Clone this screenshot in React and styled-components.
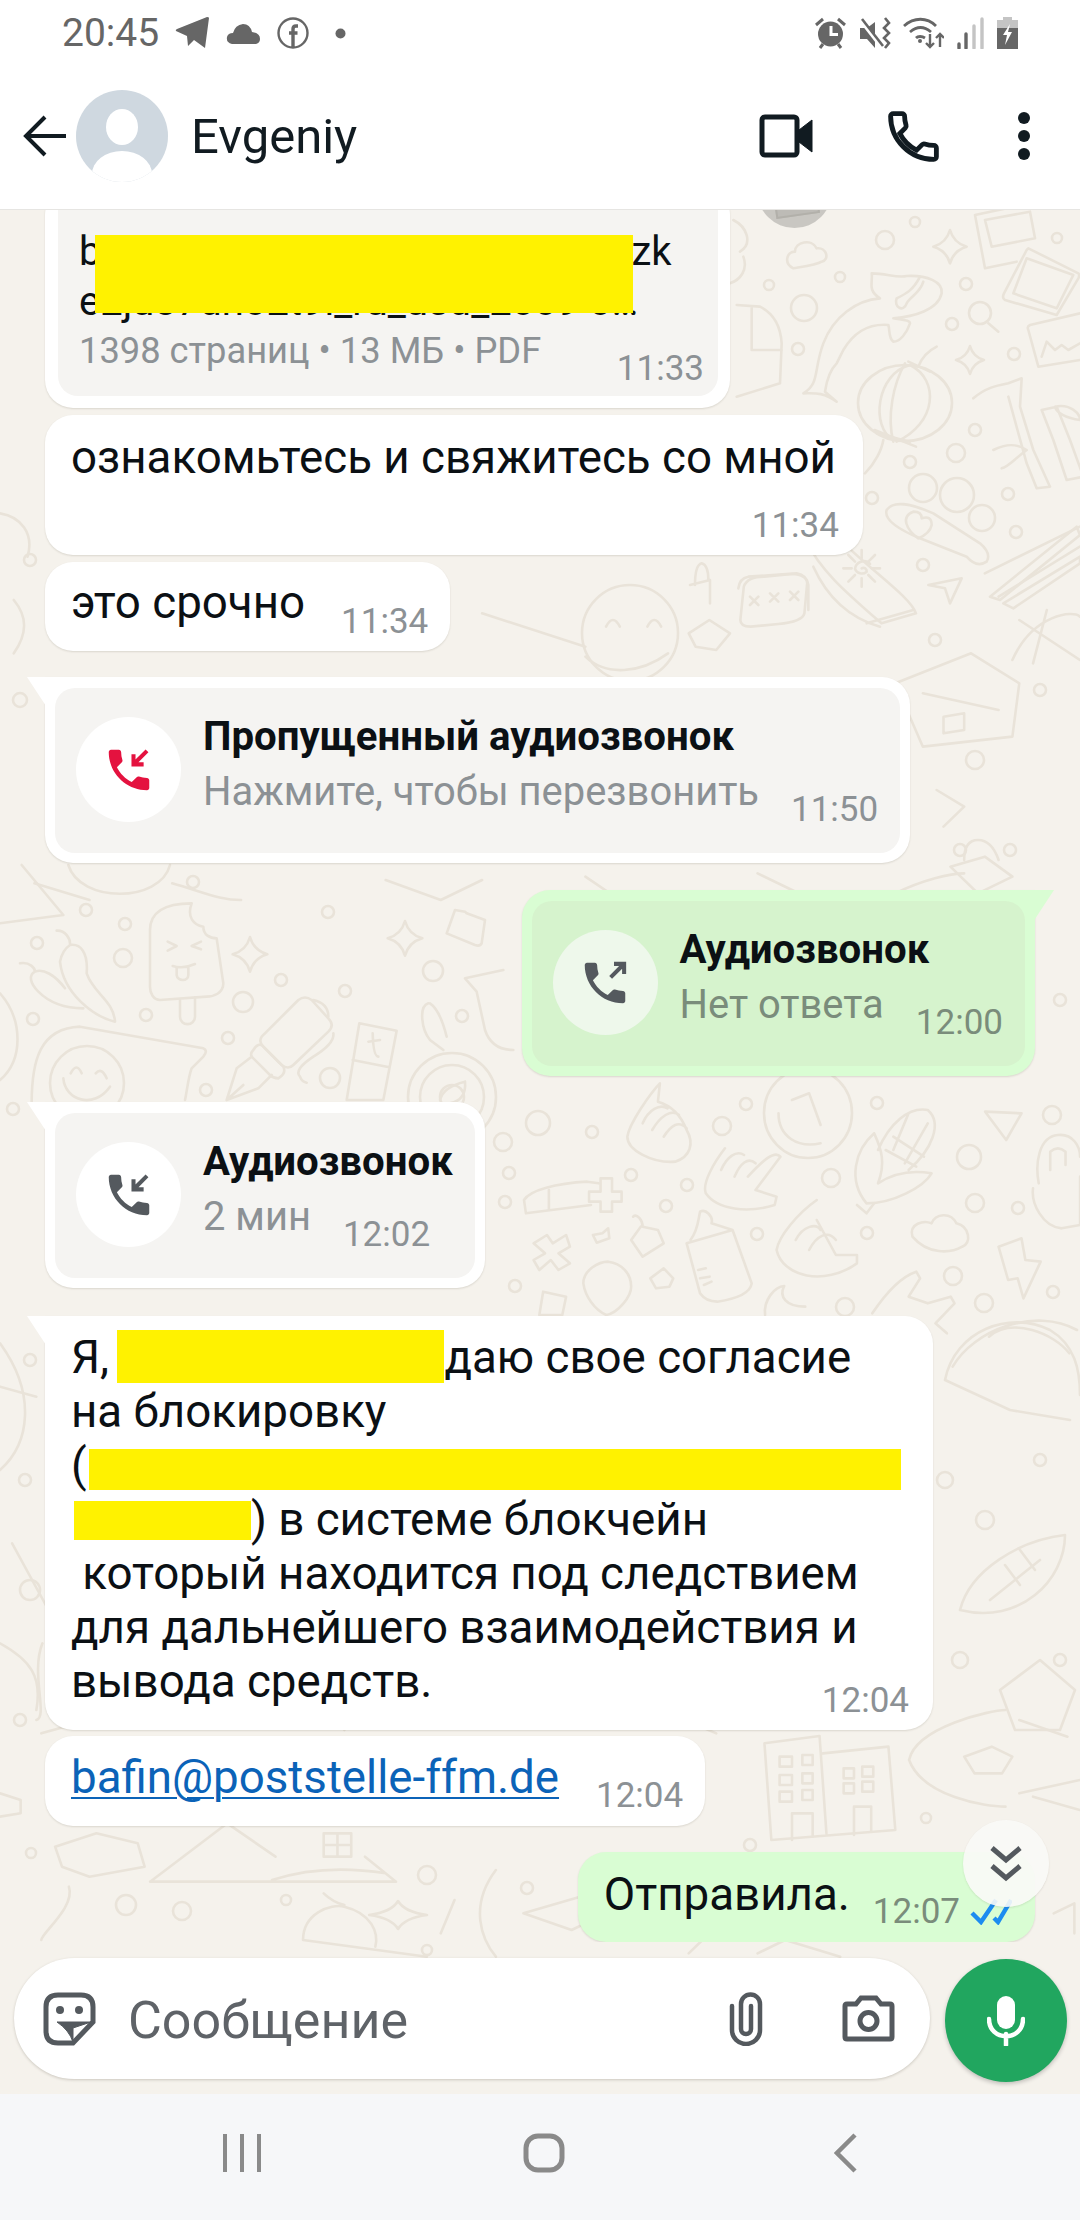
import React from 'react';
import styled, { createGlobalStyle } from 'styled-components';

const GlobalStyle = createGlobalStyle`
  html, body { margin: 0; padding: 0; background: #f5f2ec; }
  body { font-family: Roboto, "Noto Sans", sans-serif; }
  * { box-sizing: border-box; }
`;

const Screen = styled.div`
  width: 1080px;
  height: 2220px;
  display: flex;
  flex-direction: column;
  overflow: hidden;
`;

const Header = styled.header`
  height: 210px;
  flex-shrink: 0;
  background: #fff;
  border-bottom: 1px solid #e6e5e2;
  position: relative;
  z-index: 3;
`;

const StatusBar = styled.div`
  height: 66px;
  padding: 0 62px;
  display: flex;
  align-items: center;
  justify-content: space-between;
  color: #666;
`;

const StatusGroup = styled.div`
  display: flex;
  align-items: center;
  gap: ${p => p.$gap}px;
`;

const Clock = styled.span`
  font-size: 39px;
  line-height: 1;
  color: #666;
`;

const TopBar = styled.div`
  height: 140px;
  padding: 0 49px 0 23px;
  display: flex;
  align-items: center;
`;

const Avatar = styled.svg`
  width: 92px;
  height: 92px;
  margin-left: 10px;
  flex-shrink: 0;
`;

const Name = styled.div`
  margin-left: 23px;
  font-size: 49px;
  color: #111b21;
  flex: 1;
`;

const HeaderActions = styled.div`
  display: flex;
  align-items: center;
`;

const Chat = styled.main`
  flex: 1;
  min-height: 0;
  position: relative;
  background: #f5f2ec;
  display: flex;
  flex-direction: column;
`;

const Wallpaper = styled.svg`
  position: absolute;
  inset: 0;
  width: 1080px;
  height: 1884px;
  fill: none;
  stroke: #e9e3d9;
  stroke-width: 2.6;
  stroke-linecap: round;
  stroke-linejoin: round;
  * { vector-effect: non-scaling-stroke; }
`;

const Messages = styled.div`
  flex: 1;
  min-height: 0;
  overflow: hidden;
  position: relative;
  display: flex;
  flex-direction: column;
  justify-content: flex-end;
`;

const Bubble = styled.div`
  position: relative;
  flex-shrink: 0;
  align-self: ${p => (p.$out ? 'flex-end' : 'flex-start')};
  margin: ${p => p.$gap || 0}px ${p => (p.$out ? 45 : 0)}px 0 ${p => (p.$out ? 0 : 45)}px;
  width: ${p => (p.$width ? `${p.$width}px` : 'auto')};
  background: ${p => (p.$out ? '#d9fdd3' : '#fff')};
  border-radius: 28px;
  box-shadow: 0 1px 2px rgba(60, 50, 30, 0.14);
  ${p => p.$tail && !p.$out && 'border-top-left-radius: 0;'}
  ${p => p.$tail && p.$out && 'border-top-right-radius: 0;'}
  ${p => p.$tail && `
    &::before {
      content: '';
      position: absolute;
      top: 0;
      width: 19px;
      height: 29px;
      background: ${p.$out ? '#d9fdd3' : '#fff'};
      ${p.$out
        ? 'right: -19px; clip-path: polygon(0 0, 100% 0, 0 100%);'
        : 'left: -18px; clip-path: polygon(0 0, 100% 0, 100% 100%);'}
    }
  `}
`;

const InlineMessage = styled(Bubble)`
  display: flex;
  align-items: flex-start;
  gap: ${p => p.$between}px;
  padding: ${p => p.$top}px ${p => p.$right || 22}px ${p => p.$bottom}px 26px;
`;

const StackMessage = styled(Bubble)`
  display: flex;
  flex-direction: column;
  padding: 16px 27px 13px 26px;
`;

const LongMessage = styled(Bubble)`
  display: flex;
  flex-direction: column;
  padding: 14px 24px 13px 26px;
`;

const CallBubble = styled(Bubble)`
  padding: 11px 10px 10px;
`;

const FileBubble = styled(Bubble)`
  width: 685px;
  padding: 0 12px 12px 13px;
`;

const Text = styled.div`
  font-size: 45.7px;
  line-height: 54px;
  color: #0b1014;
  white-space: pre;
`;

const Link = styled.a`
  font-size: 45.7px;
  line-height: 54px;
  color: #0b63b8;
  text-decoration: underline;
  text-underline-offset: 4px;
  text-decoration-thickness: 2px;
  white-space: pre;
`;

const Time = styled.span`
  flex-shrink: 0;
  display: block;
  font-size: 35px;
  line-height: 33px;
  color: ${p => (p.$out ? '#7a8c7b' : '#8c9195')};
  margin-top: ${p => p.$drop || 0}px;
  ${p => p.$end && 'align-self: flex-end;'}
  ${p => p.$nudge && `margin-right: ${p.$nudge}px;`}
`;

const Ticks = styled.svg`
  width: 42px;
  height: 28px;
  margin: 29px 0 0 -13px;
  flex-shrink: 0;
`;

const Redact = styled.span`
  display: inline-block;
  background: #fff200;
  width: ${p => p.$w}px;
  height: ${p => p.$h}px;
  vertical-align: ${p => p.$drop}px;
  margin-left: ${p => p.$before || 0}px;
`;

const FileCover = styled.div`
  position: absolute;
  left: 16px;
  top: 8px;
  width: 538px;
  height: 78px;
  background: #fff200;
`;

const Panel = styled.div`
  border-radius: 20px;
  background: ${p => (p.$out ? '#d6f3cd' : '#f5f4f2')};
`;

const FilePanel = styled(Panel)`
  padding: 40px 14px 11px 21px;
`;

const FileName = styled.div`
  position: relative;
  font-size: 40px;
  line-height: 50px;
  height: 100px;
  color: #0b1014;
  white-space: nowrap;
`;

const NameGap = styled.span`
  display: inline-block;
  width: 530px;
`;

const FileMeta = styled.div`
  margin-top: 4px;
  display: flex;
  justify-content: space-between;
  align-items: flex-start;
`;

const MetaText = styled.span`
  font-size: 36.3px;
  line-height: 40px;
  color: #8c9195;
`;

const SharePuck = styled.div`
  position: absolute;
  left: 712px;
  bottom: 180px;
  width: 75px;
  height: 75px;
  border-radius: 50%;
  background: #c9c7c2;
  overflow: hidden;
  &::after {
    content: '';
    position: absolute;
    left: 18px;
    bottom: 12px;
    width: 40px;
    height: 14px;
    transform: rotate(-8deg);
    border: 2px solid #b2b0aa;
    background: #bdbbb6;
  }
`;

const CallPanel = styled(Panel)`
  display: flex;
  align-items: flex-start;
  padding: 24px 22px 27px 21px;
`;

const CallIcon = styled.div`
  width: 105px;
  height: 105px;
  margin: 5px 22px 0 0;
  flex-shrink: 0;
  border-radius: 50%;
  background: ${p => (p.$out ? '#eef8eb' : '#fff')};
  display: flex;
  align-items: center;
  justify-content: center;
`;

const CallBody = styled.div`
  display: flex;
  flex-direction: column;
`;

const CallTitle = styled.div`
  font-size: 40.2px;
  line-height: 50px;
  font-weight: 700;
  color: #0b1014;
  white-space: nowrap;
`;

const CallRow = styled.div`
  margin-top: 5px;
  display: flex;
  align-items: flex-start;
  gap: 32px;
`;

const CallSub = styled.span`
  font-size: 39.9px;
  line-height: 50px;
  color: ${p => (p.$out ? '#7a8c7b' : '#8c9195')};
  white-space: nowrap;
`;

const ScrollDown = styled.div`
  position: absolute;
  left: 963px;
  top: 1610px;
  width: 86px;
  height: 87px;
  border-radius: 50%;
  background: rgba(249, 249, 247, 0.9);
  box-shadow: 0 1px 2px rgba(60, 50, 30, 0.12);
  display: flex;
  align-items: center;
  justify-content: center;
  z-index: 2;
`;

const Composer = styled.div`
  position: relative;
  flex-shrink: 0;
  margin-top: 16px;
  padding: 0 13px 12px 14px;
  display: flex;
  align-items: flex-start;
  gap: 15px;
`;

const InputBox = styled.div`
  width: 916px;
  height: 121px;
  border-radius: 61px;
  background: #fff;
  box-shadow: 0 1px 3px rgba(60, 50, 30, 0.22);
  display: flex;
  align-items: center;
  padding: 0 35px 0 29px;
`;

const Placeholder = styled.div`
  flex: 1;
  margin-left: 32px;
  padding-top: 4px;
  font-size: 52px;
  color: #5f6368;
`;

const MicButton = styled.div`
  width: 122px;
  height: 123px;
  margin-top: 1px;
  border-radius: 50%;
  background: #21a65f;
  box-shadow: 0 2px 4px rgba(0, 0, 0, 0.22);
  display: flex;
  align-items: center;
  justify-content: center;
`;

const NavBar = styled.nav`
  height: 126px;
  flex-shrink: 0;
  background: #f6f7f9;
  display: grid;
  grid-template-columns: repeat(3, 302px);
  justify-content: center;
  justify-items: center;
  align-items: center;
  padding: 0 0 9px 8px;
`;

const ring = (x, y, r) => <circle key={`${x}-${y}`} cx={x} cy={y} r={r} />;

const star = (cx, cy, r) => {
  const k = r * 0.22;
  return `M${cx} ${cy - r}Q${cx + k} ${cy - k} ${cx + r} ${cy}Q${cx + k} ${cy + k} ${cx} ${cy + r}Q${cx - k} ${cy + k} ${cx - r} ${cy}Q${cx - k} ${cy - k} ${cx} ${cy - r}Z`;
};

const rings = [
  [885, 240, 9], [915, 222, 5], [1057, 238, 5], [840, 277, 5], [769, 285, 5], [804, 308, 13], [798, 349, 6],
  [966, 284, 6], [952, 324, 6], [1014, 354, 6], [975, 430, 6], [956, 453, 9], [910, 462, 6], [872, 498, 6],
  [1008, 494, 6], [1016, 532, 6], [923, 565, 6], [193, 882, 6], [86, 910, 6], [125, 924, 6], [37, 943, 6],
  [123, 958, 9], [33, 1019, 6], [146, 1015, 6], [281, 980, 6], [243, 1002, 10], [228, 1038, 6], [328, 912, 6],
  [345, 991, 6], [433, 971, 10], [462, 1016, 6], [330, 1078, 10], [206, 1090, 6], [13, 1109, 6],
  [538, 1123, 12], [503, 1142, 9], [592, 1132, 6], [509, 1173, 6], [505, 1202, 6], [631, 1175, 6], [666, 1206, 6],
  [687, 1185, 6], [722, 1126, 9], [746, 1104, 6], [877, 1103, 6], [831, 1178, 9], [969, 1157, 12], [1052, 1115, 9],
  [975, 1203, 9], [1018, 1208, 6], [757, 1234, 6], [867, 1233, 6], [953, 1276, 9], [984, 1303, 9], [1053, 1292, 6],
  [845, 1307, 9], [515, 1286, 6], [126, 1905, 10], [182, 1911, 9], [286, 1900, 5], [427, 1875, 9], [31, 1853, 5],
  [427, 1950, 5], [926, 1818, 5], [750, 1845, 6], [527, 1888, 6], [945, 1480, 8], [1040, 1460, 6], [985, 1520, 9],
  [1060, 1660, 6], [960, 1660, 8], [30, 560, 6], [20, 700, 7], [935, 640, 6], [1040, 690, 6], [975, 760, 9],
  [1010, 850, 6], [960, 850, 6], [1060, 1000, 6], [30, 1360, 6], [25, 1480, 6], [30, 1590, 10], [20, 1720, 6],
];

const zoom7 = [
  'M340 175C310 160 320 125 345 125C345 95 395 85 410 115C440 110 450 150 425 155C410 165 370 170 340 175Z',
  star(810, 110, 50), star(870, 450, 42),
  'M370 550C420 520 400 480 430 400C460 320 530 270 600 265C560 240 580 215 575 190C620 190 650 205 680 198C740 195 790 215 785 250C775 300 700 320 640 325C670 330 690 330 690 340C680 370 660 395 640 395C625 385 630 360 625 345C560 340 520 370 490 420L470 460C450 480 440 510 435 545L470 575C430 545 400 550 370 550Z',
  'M720 200C700 240 680 250 650 265C640 290 670 310 680 280C690 260 720 250 730 215',
  'M885 15L1050 -20M885 15L915 175L1010 155M915 30L1050 5L1065 85L935 110Z',
  'M1045 115L1195 190Q1200 195 1195 205L1130 315L975 270Q965 265 972 250L1040 120ZM1040 145L1180 195L1130 295L1000 250Z',
  'M1050 345L1200 310M1050 345Q1040 350 1045 360L1075 470L1200 450M1085 440L1100 395L1125 420L1145 405L1165 420L1200 400',
  'M925 340L955 365',
  'M690 465C590 490 570 650 640 690M690 465C780 510 770 640 650 695M675 460C640 520 620 620 640 695',
  'M685 455L750 485M715 470Q730 430 770 410M590 670L690 695M610 690C605 720 585 760 555 790',
  'M880 565C920 530 960 525 985 520L1025 505L1020 590L1060 720L1110 830L1070 835L1040 760L985 560',
  'M940 720C980 700 1010 700 1040 720C1000 750 985 770 965 775',
  'M1085 600L1130 590L1170 690L1210 800L1160 810L1120 690ZM1125 590C1170 580 1200 610 1200 630C1160 625 1130 610 1125 590',
  'M620 900C640 870 690 880 760 910L900 1000Q935 1030 920 1055Q890 1075 860 1040L720 985C660 960 610 930 620 900Z',
  'M715 985C680 960 660 920 700 905Q725 905 725 925Q755 915 755 945Q750 970 715 985Z',
  'M930 1160L1190 950L1200 975L960 1170ZM970 1180L1200 1040V1060L1000 1195Z',
  'M545 1045V1020M545 1105V1130M515 1075H490M575 1075H600M525 1055L505 1035M565 1055L585 1035M525 1095L505 1115M565 1095L585 1115',
  'M545 1075a10 10 0 0 1 15 10a22 22 0 0 1 -35 -8a26 26 0 0 1 45 -15',
  'M745 1125L845 1105L810 1180L795 1135Z',
  'M175 1135Q178 1105 205 1100L350 1090Q380 1095 385 1125V1200',
  'M210 1160L235 1185M235 1160L210 1185M270 1150L295 1175M295 1150L270 1175M330 1145L355 1170M355 1145L330 1170',
  'M30 1125L90 1110V1180M45 1125Q45 1065 65 1060Q85 1065 85 1110',
  'M170 285L240 290Q300 320 305 400L300 520L170 560M215 290V420H305',
  'M160 30C200 50 220 100 180 125M150 220C180 210 205 180 190 140',
  'M400 1070C450 1180 530 1230 600 1250M700 1200L560 1240',
];

const zoom8 = [
  'M450 380V210C450 160 490 130 575 130C560 170 580 195 610 200C610 225 630 235 650 235L670 370C670 400 640 410 620 410L480 420C460 420 450 400 450 380Z',
  'M540 420V470C540 500 585 500 585 470V412',
  'M503 245L530 258L503 272M603 245L575 258L603 268M518 318Q550 328 585 312M530 325V345C532 365 565 365 565 345V322',
  star(750, 283, 52), star(1215, 235, 52),
  'M210 255C240 250 265 275 260 340C280 400 340 420 345 485C280 470 190 400 180 305C185 280 195 265 210 255ZM170 212C195 210 212 235 210 255',
  'M60 310C90 305 105 325 105 335C85 345 90 370 115 395C150 430 200 445 250 445M105 335C130 325 165 345 195 385',
  'M95 730C95 600 120 505 240 500L610 565Q625 572 610 590L575 625C565 650 560 700 555 720',
  'M212 640Q230 605 245 640M287 640Q305 620 320 655M190 655C195 720 280 750 330 680',
  'M785 530L895 420Q915 405 935 420L985 475Q1005 495 985 515L880 615Q865 630 845 615L790 560Q775 545 785 530Z',
  'M760 570Q775 545 790 560L850 620Q860 640 835 655Q820 655 810 645L755 590Q750 580 760 570',
  'M755 590L710 625L680 720L775 685L815 645M680 720L730 675',
  'M940 420Q985 430 985 470M1000 520Q1005 550 940 590Q880 630 900 650Q905 665 920 668',
  'M1078 490L1190 512L1150 720L1040 720ZM1058 600L1168 622M1118 520Q1120 590 1135 590M1105 545L1140 540',
  'M1285 430C1255 440 1265 510 1290 540L1330 570M1290 430Q1320 450 1340 530',
  'M1395 665Q1330 680 1320 720M1395 665Q1400 720 1350 730',
  'M65 15L190 165L0 190M205 15C240 130 480 130 510 15M0 400C70 480 70 600 0 660',
  'M1395 355L1510 330M1395 355L1430 395L1455 510Q1475 570 1540 570',
  'M1340 220L1365 150L1395 155L1400 160L1455 180L1445 250Q1440 260 1425 255Z',
];

const zoom9 = [
  'M470 40C445 70 390 160 385 200C385 240 450 280 510 275C550 260 560 220 540 180C530 150 510 110 465 95ZM425 160C440 120 470 100 490 115M450 180C470 140 500 115 520 135M480 200C500 165 520 150 540 175',
  'M815 90L860 70L890 165M780 130C780 200 830 235 890 220',
  'M1030 190C980 240 960 330 1010 400C1080 400 1160 350 1180 310C1130 300 1080 310 1040 340M1030 190C1050 240 1060 280 1040 340M1040 240C1070 160 1120 110 1170 120C1210 160 1180 240 1120 300M1080 200L1160 260M1060 240L1140 290M1120 130L1080 240M1170 160L1110 280',
  'M985 405L1010 430L1030 400',
  'M1320 125L1415 130L1375 210Z',
  'M1460 340C1450 280 1460 200 1510 195C1550 190 1568 230 1568 260M1490 300V245Q1510 225 1530 245V285M1445 355C1440 400 1470 470 1520 475L1568 465V320',
  'M120 430L115 390C130 360 200 340 280 335L310 340M180 360V420M120 430L290 405',
  'M285 365H315V325H345V365H370V395H345V425H315V395H285Z',
  'M640 235C610 280 580 340 590 370C620 420 700 430 770 405L775 380L720 360L785 260C770 240 740 270 700 320',
  'M630 300C645 260 670 240 690 255M665 320C680 280 700 260 720 280',
  'M880 390C830 430 780 500 775 540C790 620 900 650 985 580L985 555L930 555L880 450',
  'M825 510C845 465 880 460 890 480M860 540C880 495 910 480 930 510',
  'M1130 500C1120 460 1160 450 1180 460C1190 430 1230 425 1245 460C1280 470 1285 520 1260 530C1230 550 1170 555 1130 500Z',
  'M1355 530L1415 505L1425 570L1465 575L1420 685L1405 625L1380 630Z',
  'M140 520L175 495L190 520L225 495L235 530L205 550L235 580L205 600L185 570L155 600L140 570L170 550Z',
  'M400 440C410 430 425 450 425 470L465 480L480 520L425 560L395 510L420 470',
  'M320 490L335 475L338 505L305 518L295 495Z',
  'M540 520L660 480L710 640Q705 680 620 695Q590 695 575 670ZM550 510C570 480 570 450 575 425C590 415 610 440 605 460L660 480M570 600L590 595M575 625L600 620M585 645L605 635',
  'M270 640C270 600 310 575 335 575C370 580 395 610 395 650C395 680 360 730 330 735C300 720 275 680 270 640Z',
  'M445 625L480 595L505 625L495 650L460 655Z',
  'M165 665L225 680L215 735H155Z',
  'M745 735C740 690 770 650 795 648C780 680 800 710 850 710',
  'M1025 730C1060 670 1100 620 1140 605L1150 625L1120 680L1170 700L1230 680L1240 700L1190 760L1220 790',
  'M1235 890C1290 780 1450 710 1560 780M1330 800C1390 740 1500 790 1540 850',
];

const zoom2 = [
  'M1080 560Q1085 530 1110 530L1150 522Q1172 525 1172 550L1168 640Q1165 665 1130 672L1090 680Q1075 680 1075 660Z',
  'M880 680Q890 640 900 680M940 680Q950 640 960 680M850 770C880 830 930 820 970 760',
  'M1000 700L1030 660L1060 700L1040 750L1010 740Z',
  'M700 640L850 740M1300 850L1410 760L1480 850L1470 1010L1340 1040Z',
  'M1340 880L1450 930M1370 950L1400 940L1400 990L1370 1000Z',
  'M1470 780C1500 640 1560 630 1568 650M1480 660L1568 780M1520 630L1500 790',
  'M1430 520L1568 380M1568 440L1450 590M1200 370C1240 480 1320 580 1330 640L1280 670C1230 580 1190 510 1170 420',
  'M1270 90L1330 140M20 600C40 650 40 700 20 760M0 340C30 350 50 400 40 470',
  'M1380 1400L1430 1370L1470 1430L1420 1480ZM1400 1380Q1400 1320 1420 1320Q1440 1320 1450 1380',
  'M1300 1480C1340 1440 1380 1420 1400 1420M1360 1170L1400 1220L1370 1280M1100 1420L1180 1500M50 1450L130 1500',
  'M560 1440L640 1500M250 1450C300 1480 320 1500 350 1500M700 1440L640 1500M850 1430L900 1500',
];

const zoom4 = [
  'M1120 420L1110 130L1190 108L1200 400M1195 160L1290 140L1300 390L1120 420',
  'M1132 170H1150V200H1132ZM1165 165H1180V195H1165ZM1132 225H1150V255H1132ZM1165 220H1180V250H1165ZM1132 275H1150V305H1132ZM1165 270H1180V300H1165ZM1225 205H1240V235H1225ZM1252 200H1268V230H1252ZM1225 250H1240V280H1225ZM1252 245H1268V275H1252Z',
  'M1150 420V340H1180V410M1240 405V320H1265V395',
  'M218 545L330 370L400 470M218 545H575L530 470M395 540Q470 490 560 520',
  'M470 400H510V470H470ZM490 400V470M470 435H510',
  'M440 720C440 640 480 610 500 620C540 640 550 700 545 740M440 720L620 770M470 580C480 600 490 610 500 615',
  'M1400 170L1440 140L1470 170L1455 220L1415 220Z',
  'M1320 180C1330 80 1440 30 1460 30M1320 180C1340 290 1430 320 1460 320',
  'M1480 280L1568 240M1500 290L1568 330',
  'M80 440L140 400L200 430L210 500L130 530L90 500ZM100 560C110 620 60 700 60 720',
  star(578, 645, 42),
  'M660 600L640 700M720 510C680 620 700 720 720 770M760 640L830 690L880 640L860 580Z',
  'M1100 760L1140 720L1220 770',
  'M1530 640L1560 610V700',
  'M0 280L30 300V340L0 350M1000 760L1020 720',
  'M60 100L130 60M300 70L360 20M500 90L470 20M690 60L770 30M960 30L1040 100M1480 60L1550 110',
];

const zoom10 = [
  'M0 100C60 250 50 400 0 480M20 700L80 900M0 1000C50 1050 70 1100 60 1200',
  'M0 230L60 260M70 1000C50 1090 80 1220 60 1230',
];

const rightColumn = [
  'M945 1380C955 1330 1010 1310 1050 1330C1075 1345 1080 1370 1080 1395M945 1380L1010 1410L1070 1420',
  'M960 1610C970 1570 1020 1540 1065 1535C1065 1580 1020 1625 960 1610ZM990 1600L1040 1560M1005 1565L1020 1585M1020 1550L1035 1570',
  'M1000 1690L1040 1660L1075 1690L1060 1730L1015 1730Z',
];

const Doodles = ({ items, x = 0, y = 0, sx = 1, sy = 1 }) => (
  <g transform={`translate(${x} ${y}) scale(${sx} ${sy})`}>
    {items.map((d, i) => <path key={i} d={d} />)}
  </g>
);

const DoodleLayer = () => (
  <Wallpaper viewBox="0 210 1080 1884">
    {rings.map(([x, y, r]) => ring(x, y, r))}
    <circle cx="980" cy="313" r="11" />
    <ellipse cx="905" cy="403" rx="47" ry="38" />
    <circle cx="923" cy="488" r="14" />
    <circle cx="957" cy="495" r="17" />
    <circle cx="982" cy="518" r="13" />
    <circle cx="630" cy="633" r="48" />
    <circle cx="87" cy="1083" r="37" />
    <circle cx="452" cy="1097" r="12" />
    <circle cx="452" cy="1097" r="32" />
    <circle cx="452" cy="1097" r="44" />
    <ellipse cx="808" cy="1113" rx="44" ry="45" />
    <Doodles items={zoom7} x={680} y={210} sx={1 / 3} sy={1 / 3} />
    <Doodles items={zoom8} x={0} y={860} sx={1 / 3} sy={1 / 3} />
    <Doodles items={zoom9} x={480} y={1070} sx={0.3827} sy={1 / 3} />
    <Doodles items={zoom2} x={0} y={400} sx={0.6887} sy={1 / 3} />
    <Doodles items={zoom4} x={0} y={1700} sx={0.6887} sy={1 / 3} />
    <Doodles items={zoom10} x={0} y={1310} sx={0.606} sy={1 / 3} />
    <Doodles items={rightColumn} />
  </Wallpaper>
);

const HANDSET = 'M6.62 10.79c1.44 2.83 3.76 5.14 6.59 6.59l2.2-2.2c.27-.27.67-.36 1.02-.24 1.12.37 2.33.57 3.57.57.55 0 1 .45 1 1V20c0 .55-.45 1-1 1-9.39 0-17-7.61-17-17 0-.55.45-1 1-1h3.5c.55 0 1 .45 1 1 0 1.25.2 2.45.57 3.57.11.35.03.74-.25 1.02l-2.2 2.2z';

const CallGlyph = ({ color, outgoing }) => (
  <svg width="54" height="54" viewBox="0 0 24 24">
    <path d={HANDSET} fill={color} />
    <path
      d={outgoing ? 'M14.5 9.5L20 4M16 3.5H20.5V8' : 'M20 3.5L14.5 9M14 5V9.5H18.5'}
      fill="none"
      stroke={color}
      strokeWidth="1.8"
    />
  </svg>
);

const Call = ({ out, tail, gap, title, sub, time, color, outgoing }) => (
  <CallBubble $out={out} $tail={tail} $gap={gap}>
    <CallPanel $out={out}>
      <CallIcon $out={out}><CallGlyph color={color} outgoing={outgoing} /></CallIcon>
      <CallBody>
        <CallTitle>{title}</CallTitle>
        <CallRow>
          <CallSub $out={out}>{sub}</CallSub>
          <Time $out={out} $drop={26}>{time}</Time>
        </CallRow>
      </CallBody>
    </CallPanel>
  </CallBubble>
);

const Status = () => (
  <StatusBar>
    <StatusGroup $gap={16}>
      <Clock>20:45</Clock>
      <svg width="35" height="32" viewBox="0 0 35 32" fill="#666">
        <path d="M34 1L30 31 19 23 13 29 12 19 1 14Q0 13 2 12L32 0Q34 0 34 1ZM14 18L27 8 17 20Z" />
      </svg>
      <svg width="35" height="21" viewBox="0 0 35 21" fill="#666">
        <path d="M6 21Q0 20 1 14 2 10 7 10 9 2 17 1 24 1 26 9 34 10 34 16 34 20 30 21Z" />
      </svg>
      <svg width="32" height="32" viewBox="0 0 32 32" fill="none" stroke="#666" strokeWidth="2.4">
        <circle cx="16" cy="16" r="14.5" />
        <path d="M21 9H19Q16 9 16 12V31M12 16H20.5" strokeWidth="3.4" />
      </svg>
      <svg width="11" height="11" viewBox="0 0 11 11" style={{ marginLeft: 10 }}>
        <circle cx="5.5" cy="5.5" r="5" fill="#666" />
      </svg>
    </StatusGroup>
    <StatusGroup $gap={12}>
      <svg width="33" height="32" viewBox="0 0 33 32" fill="#666">
        <circle cx="16.5" cy="17" r="12.5" />
        <path d="M2 8L9 2M31 8L24 2M6 31L9 27M27 31L24 27" stroke="#666" strokeWidth="3" />
        <path d="M15.5 9H18.5V16H24V19H15.5Z" fill="#fff" />
      </svg>
      <svg width="32" height="32" viewBox="0 0 32 32" fill="#666">
        <path d="M1 11H8L16 5V31L8 22H1Z" />
        <path d="M1 3L22 30" stroke="#fff" strokeWidth="3" />
        <path d="M3 2L24 29" stroke="#666" strokeWidth="2.6" />
        <path d="M26 1L30 6 25 11 30 16 25 21 30 26 26 31" fill="none" stroke="#666" strokeWidth="2.6" />
      </svg>
      <svg width="41" height="32" viewBox="0 0 41 32" fill="none" stroke="#666" strokeWidth="2.8">
        <path d="M1 9C11 0 24 0 33 9M7 15C14 9 21 9 28 15M13 21C15 19 19 19 22 21" />
        <circle cx="17" cy="24" r="2" fill="#666" stroke="none" />
        <path d="M27 17V30M23 26L27 30 31 26M37 30V17M33 21L37 17 41 21" strokeWidth="2.4" />
      </svg>
      <svg width="29" height="32" viewBox="0 0 29 32" fill="none" strokeWidth="3.4" strokeLinecap="round">
        <path d="M3 31V27M10 31V17" stroke="#666" />
        <path d="M18 31V9M26 31V2" stroke="#c4c4c4" />
      </svg>
      <svg width="21" height="32" viewBox="0 0 21 32" fill="#666">
        <path d="M6 0H15V3H21V32H0V3H6Z" />
        <path d="M6 0H15V3H21V11H0V3H6Z" fill="#c4c4c4" />
        <path d="M13 7L6 18H10L8 28 15 15H11L13 7Z" fill="#fff" />
      </svg>
    </StatusGroup>
  </StatusBar>
);

const TopRow = () => (
  <TopBar>
    <svg width="43" height="42" viewBox="0 0 43 42" fill="none" stroke="#111b21" strokeWidth="4">
      <path d="M43 21H3M22 2L3 21 22 40" />
    </svg>
    <Avatar viewBox="0 0 92 92">
      <defs>
        <clipPath id="avatarClip"><circle cx="46" cy="46" r="46" /></clipPath>
      </defs>
      <circle cx="46" cy="46" r="46" fill="#cfd8e0" />
      <g clipPath="url(#avatarClip)" fill="#fff">
        <ellipse cx="46" cy="37" rx="16" ry="18" />
        <ellipse cx="46" cy="84" rx="30" ry="23" />
      </g>
    </Avatar>
    <Name>Evgeniy</Name>
    <HeaderActions>
      <svg width="54" height="44" viewBox="0 0 54 44" fill="none" stroke="#111b21" strokeWidth="5">
        <rect x="3" y="3" width="35" height="38" rx="3" />
        <path d="M40 16L53 6V38L40 28Z" fill="#111b21" strokeWidth="1" />
      </svg>
      <svg width="61" height="61" viewBox="0 0 24 24" fill="none" stroke="#111b21" strokeWidth="1.9" style={{ marginLeft: 70 }}>
        <path d={HANDSET} />
      </svg>
      <svg width="14" height="50" viewBox="0 0 14 50" fill="#111b21" style={{ marginLeft: 73 }}>
        <circle cx="7" cy="7" r="6" />
        <circle cx="7" cy="25" r="6" />
        <circle cx="7" cy="43" r="6" />
      </svg>
    </HeaderActions>
  </TopBar>
);

const ChatThread = () => (
  <Messages>
    <FileBubble>
      <SharePuck />
      <FilePanel>
        <FileName>
          <FileCover />
          b<NameGap />zk
          <br />
          e2ju87dn02t9i_ru_usd_2009 0…
        </FileName>
        <FileMeta>
          <MetaText>1398 страниц • 13 МБ • PDF</MetaText>
          <Time $drop={21}>11:33</Time>
        </FileMeta>
      </FilePanel>
    </FileBubble>

    <StackMessage $gap={7}>
      <Text>ознакомьтесь и свяжитесь со мной</Text>
      <Time $drop={24} $end $nudge={-3}>11:34</Time>
    </StackMessage>

    <InlineMessage $gap={7} $between={36} $top={14} $bottom={13}>
      <Text>это срочно</Text>
      <Time $drop={29}>11:34</Time>
    </InlineMessage>

    <Call tail gap={26} title="Пропущенный аудиозвонок" sub="Нажмите, чтобы перезвонить" time="11:50" color="#e4123f" />
    <Call out tail outgoing gap={27} title="Аудиозвонок" sub="Нет ответа" time="12:00" color="#54595e" />
    <Call tail gap={26} title="Аудиозвонок" sub="2 мин" time="12:02" color="#54595e" />

    <LongMessage $tail $gap={28} $width={888}>
      <Text>Я, <Redact $w={327} $h={53} $drop={-10} $before={-3} />даю свое согласие</Text>
      <Text>на блокировку</Text>
      <Text>(<Redact $w={812} $h={41} $drop={-9} $before={2} /></Text>
      <Text><Redact $w={177} $h={39} $drop={-5} $before={3} />) в системе блокчейн</Text>
      <Text> который находится под следствием</Text>
      <Text>для дальнейшего взаимодействия и</Text>
      <Text>вывода средств.</Text>
      <Time $drop={-25} $end>12:04</Time>
    </LongMessage>

    <InlineMessage $gap={6} $between={37} $top={15} $bottom={14}>
      <Link>bafin@poststelle-ffm.de</Link>
      <Time $drop={28}>12:04</Time>
    </InlineMessage>

    <InlineMessage $out $gap={26} $between={23} $top={16} $bottom={14} $right={23}>
      <Text>Отправила.</Text>
      <Time $out $drop={27}>12:07</Time>
      <Ticks viewBox="0 0 42 28" fill="none" stroke="#1d8cf0" strokeWidth="4.4">
        <path d="M2 16L11 25 26 3M24 21L28 25 41 3" />
      </Ticks>
    </InlineMessage>

    <ScrollDown>
      <svg width="34" height="38" viewBox="0 0 34 38" fill="none" stroke="#54595e" strokeWidth="5">
        <path d="M3 3L17 15 31 3M3 21L17 33 31 21" />
      </svg>
    </ScrollDown>
  </Messages>
);

const MessageComposer = () => (
  <Composer>
    <InputBox>
      <svg width="53" height="54" viewBox="0 0 53 54" fill="none" stroke="#54595e" strokeWidth="5">
        <path d="M15 3H38Q50 3 50 15V30L30 51H15Q3 51 3 39V15Q3 3 15 3Z" />
        <circle cx="17" cy="18" r="4" fill="#54595e" stroke="none" />
        <circle cx="36" cy="18" r="4" fill="#54595e" stroke="none" />
        <path d="M14 30H48L30 36V50Q26 38 14 30Z" fill="#54595e" strokeWidth="1" />
      </svg>
      <Placeholder>Сообщение</Placeholder>
      <svg width="34" height="54" viewBox="0 0 34 54" fill="none" stroke="#54595e" strokeWidth="4.5" strokeLinecap="round">
        <path d="M3 14V38A14 14 0 0 0 31 38V12A9.5 9.5 0 0 0 12 12V37A5 5 0 0 0 22 37V14" />
      </svg>
      <svg width="53" height="47" viewBox="0 0 53 47" fill="none" stroke="#54595e" strokeWidth="5" style={{ marginLeft: 79 }}>
        <path d="M5 9H14L19 3H34L39 9H48Q50 9 50 11V42Q50 44 48 44H5Q3 44 3 42V11Q3 9 5 9Z" />
        <circle cx="26.5" cy="26" r="8.5" />
      </svg>
    </InputBox>
    <MicButton>
      <svg width="38" height="50" viewBox="0 0 38 50" fill="none">
        <rect x="10" y="0" width="18" height="33" rx="9" fill="#fff" />
        <path d="M2 23C2 46 36 46 36 23M19 38V49" stroke="#fff" strokeWidth="4.5" strokeLinecap="round" />
      </svg>
    </MicButton>
  </Composer>
);

const BottomNav = () => (
  <NavBar>
    <svg width="38" height="40" viewBox="0 0 38 40" stroke="#8a8a8a" strokeWidth="4">
      <path d="M2 1V39M19 1V39M36 1V39" />
    </svg>
    <svg width="42" height="40" viewBox="0 0 42 40" fill="none" stroke="#8a8a8a" strokeWidth="5">
      <rect x="3" y="3" width="36" height="34" rx="12" />
    </svg>
    <svg width="24" height="40" viewBox="0 0 24 40" fill="none" stroke="#8a8a8a" strokeWidth="4.5">
      <path d="M21 2L3 20 21 38" />
    </svg>
  </NavBar>
);

export default function App() {
  return (
    <Screen>
      <GlobalStyle />
      <Header>
        <Status />
        <TopRow />
      </Header>
      <Chat>
        <DoodleLayer />
        <ChatThread />
        <MessageComposer />
      </Chat>
      <BottomNav />
    </Screen>
  );
}
